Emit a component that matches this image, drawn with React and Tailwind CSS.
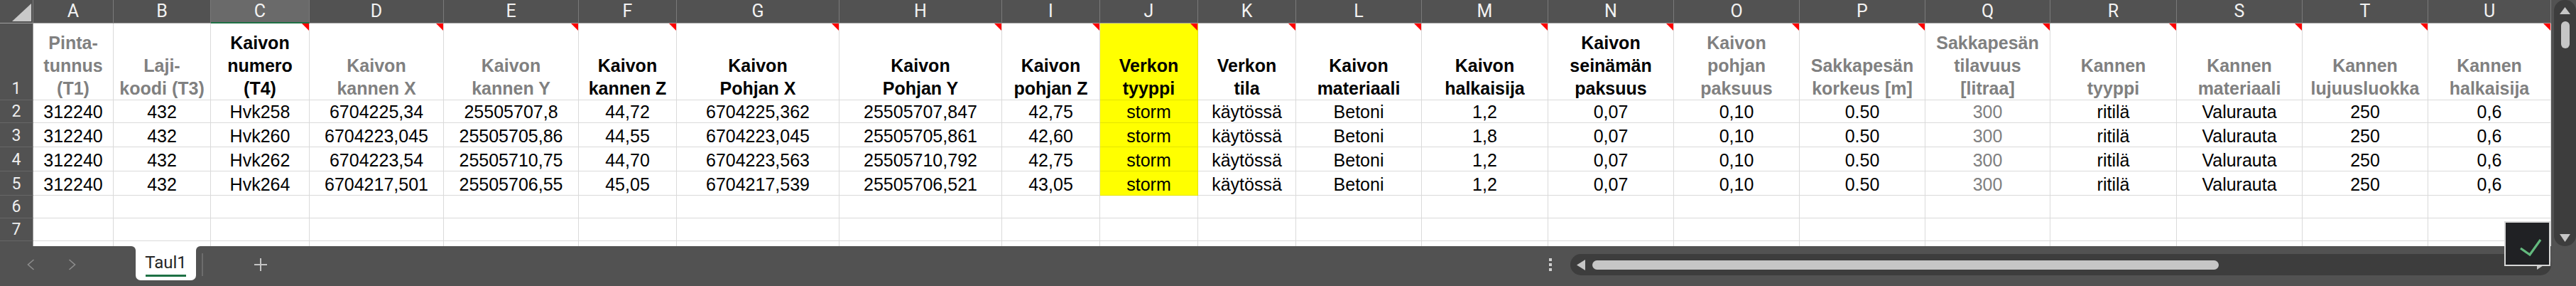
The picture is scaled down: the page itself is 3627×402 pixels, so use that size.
import React from 'react';

const LETTERS = 'ABCDEFGHIJKLMNOPQRSTU'.split('');

const HEADS = [
  { t: ['Pinta-', 'tunnus', '(T1)'], gray: true },
  { t: ['Laji-', 'koodi (T3)'], gray: true },
  { t: ['Kaivon', 'numero', '(T4)'] },
  { t: ['Kaivon', 'kannen X'], gray: true },
  { t: ['Kaivon', 'kannen Y'], gray: true },
  { t: ['Kaivon', 'kannen Z'] },
  { t: ['Kaivon', 'Pohjan X'] },
  { t: ['Kaivon', 'Pohjan Y'] },
  { t: ['Kaivon', 'pohjan Z'] },
  { t: ['Verkon', 'tyyppi'] },
  { t: ['Verkon', 'tila'] },
  { t: ['Kaivon', 'materiaali'] },
  { t: ['Kaivon', 'halkaisija'] },
  { t: ['Kaivon', 'seinämän', 'paksuus'] },
  { t: ['Kaivon', 'pohjan', 'paksuus'], gray: true },
  { t: ['Sakkapesän', 'korkeus [m]'], gray: true },
  { t: ['Sakkapesän', 'tilavuus', '[litraa]'], gray: true },
  { t: ['Kannen', 'tyyppi'], gray: true },
  { t: ['Kannen', 'materiaali'], gray: true },
  { t: ['Kannen', 'lujuusluokka'], gray: true },
  { t: ['Kannen', 'halkaisija'], gray: true },
];

const tail = ['storm', 'käytössä', 'Betoni'];
const end = ['0,07', '0,10', '0.50', '300', 'ritilä', 'Valurauta', '250', '0,6'];

const ROWS = [
  ['312240', '432', 'Hvk258', '6704225,34', '25505707,8', '44,72', '6704225,362', '25505707,847', '42,75', ...tail, '1,2', ...end],
  ['312240', '432', 'Hvk260', '6704223,045', '25505705,86', '44,55', '6704223,045', '25505705,861', '42,60', ...tail, '1,8', ...end],
  ['312240', '432', 'Hvk262', '6704223,54', '25505710,75', '44,70', '6704223,563', '25505710,792', '42,75', ...tail, '1,2', ...end],
  ['312240', '432', 'Hvk264', '6704217,501', '25505706,55', '45,05', '6704217,539', '25505706,521', '43,05', ...tail, '1,2', ...end],
];

const YELLOW = 9; // column J
const GRAY_DATA = 16; // column Q

const RedMark = () => (
  <svg className="absolute top-0 right-0" width="10" height="10" viewBox="0 0 10 10">
    <polygon points="0,0 10,0 10,10" fill="#ff0000" />
  </svg>
);

const RowNum = ({ n }) => (
  <div className="flex items-end justify-center bg-[#525252] border-r border-r-[#9a9a9a] border-b border-b-[#666666] text-[#eeeeee] text-[23px] leading-[30px] font-['Roboto',sans-serif]">
    {n}
  </div>
);

const DataCell = ({ value, col, filled }) => {
  const yellow = filled && col === YELLOW;
  return (
    <div
      className={
        yellow
          ? 'flex items-end justify-center border-r border-b border-[#e4e400] bg-[#ffff00] text-black text-[25px] leading-[30px] whitespace-nowrap overflow-hidden'
          : col === GRAY_DATA
          ? 'flex items-end justify-center border-r border-b border-[#dadada] bg-white text-[#808080] text-[25px] leading-[30px] whitespace-nowrap overflow-hidden'
          : 'flex items-end justify-center border-r border-b border-[#dadada] bg-white text-black text-[25px] leading-[30px] whitespace-nowrap overflow-hidden'
      }
    >
      {value}
    </div>
  );
};

const Chevron = ({ dir }) => (
  <svg width="11" height="16" viewBox="0 0 11 16">
    <polyline
      points={dir === 'left' ? '9.5,1 1.5,8 9.5,15' : '1.5,1 9.5,8 1.5,15'}
      fill="none"
      stroke="#8d8d8d"
      strokeWidth="1.6"
    />
  </svg>
);

export default function App() {
  return (
    <div className="relative w-[3627px] h-[402px] overflow-hidden bg-white font-['Liberation_Sans',Arial,sans-serif]">
      <div className="flex h-[346px]">
        {/* sheet grid */}
        <div className="grid w-[3592px] h-[346px] overflow-hidden grid-cols-[47px_113px_137px_139px_189px_190px_138px_229px_229px_138px_138px_138px_177px_178px_177px_177px_177px_176px_178px_177px_177px_173px] grid-rows-[33px_108px_32px_34px_34px_34px_32px_32px_33px]">
          {/* corner */}
          <div className="relative bg-[#525252] border-r border-r-[#7a7a7a] border-b border-b-[#a0a0a0]">
            <svg className="absolute left-[17px] top-[5px]" width="28" height="26" viewBox="0 0 28 26">
              <polygon points="0,25 27,0 27,25" fill="#c9c9c9" />
            </svg>
          </div>
          {LETTERS.map((l) =>
            l === 'C' ? (
              <div key={l} className="flex items-center justify-center bg-[#6a6a6a] border-r border-r-[#7a7a7a] border-b-2 border-b-[#1e7145] text-[#f2f2f2] text-[25px] font-['Roboto',sans-serif]">
                {l}
              </div>
            ) : (
              <div key={l} className="flex items-center justify-center bg-[#525252] border-r border-r-[#7a7a7a] border-b border-b-[#a0a0a0] text-[#f2f2f2] text-[25px] font-['Roboto',sans-serif]">
                {l}
              </div>
            )
          )}

          {/* row 1: headings */}
          <RowNum n={1} />
          {HEADS.map((h, i) => (
            <div
              key={i}
              className={
                i === YELLOW
                  ? 'relative flex flex-col items-center justify-end border-r border-b border-[#e4e400] bg-[#ffff00] text-black font-bold text-[25px] leading-[32px] whitespace-nowrap'
                  : h.gray
                  ? 'relative flex flex-col items-center justify-end border-r border-b border-[#dadada] bg-white text-[#808080] font-bold text-[25px] leading-[32px] whitespace-nowrap'
                  : 'relative flex flex-col items-center justify-end border-r border-b border-[#dadada] bg-white text-black font-bold text-[25px] leading-[32px] whitespace-nowrap'
              }
            >
              {h.t.map((line) => (
                <div key={line}>{line}</div>
              ))}
              {i >= 2 && <RedMark />}
            </div>
          ))}

          {/* rows 2-5 */}
          {ROWS.map((row, r) => (
            <React.Fragment key={r}>
              <RowNum n={r + 2} />
              {row.map((v, c) => (
                <DataCell key={c} value={v} col={c} filled />
              ))}
            </React.Fragment>
          ))}

          {/* empty rows 6-7, plus the sliver of row 8 under the tab bar */}
          {[6, 7, ''].map((n, k) => (
            <React.Fragment key={k}>
              <RowNum n={n} />
              {LETTERS.map((l, c) => (
                <DataCell key={l} value="" col={c} />
              ))}
            </React.Fragment>
          ))}
        </div>

        {/* vertical scrollbar */}
        <div className="w-[35px] h-[346px] bg-[#525252] pl-[4px]">
          <div className="flex flex-col items-center h-full w-[31px] rounded-[15px] bg-[#3d3d3d] pt-[10px] pb-[6px]">
            <svg width="15" height="10" viewBox="0 0 15 10">
              <polygon points="7.5,0 15,10 0,10" fill="#c6c6c6" />
            </svg>
            <div className="mt-[10px] w-[12px] h-[38px] rounded-full bg-[#c6c6c6]" />
            <div className="flex-1" />
            <svg width="15" height="11" viewBox="0 0 15 11">
              <polygon points="0,0 15,0 7.5,11" fill="#c6c6c6" />
            </svg>
          </div>
        </div>
      </div>

      {/* sheet tabs bar */}
      <div className="flex h-[56px] bg-white">
        <div className="flex items-center w-[191px] pl-[38px] pb-[4px] gap-[47px] bg-[#525252] rounded-tr-[6px]">
          <Chevron dir="left" />
          <Chevron dir="right" />
        </div>
        <div className="w-[85px] bg-[#525252]">
          <div className="flex flex-col items-center h-[48px] bg-white rounded-b-[7px] pt-[9px]">
            <span className="text-[24px] leading-[28px] text-[#262626] font-['Roboto',sans-serif]">Taul1</span>
            <div className="mt-[3px] w-[57px] h-[3px] bg-[#1e7145]" />
          </div>
        </div>
        <div className="flex flex-1 items-center pb-[4px] pr-[35px] bg-[#525252] rounded-tl-[6px]">
          <div className="ml-[8px] w-[2px] h-[32px] bg-[#6c6c6c]" />
          <svg className="ml-[72px]" width="18" height="18" viewBox="0 0 18 18">
            <path d="M9 0v18M0 9h18" stroke="#c4c4c4" strokeWidth="2" />
          </svg>
          <div className="flex-1" />
          <div className="flex flex-col gap-[3px]">
            <div className="w-[4px] h-[4px] bg-[#cfcfcf]" />
            <div className="w-[4px] h-[4px] bg-[#cfcfcf]" />
            <div className="w-[4px] h-[4px] bg-[#cfcfcf]" />
          </div>
          <div className="flex items-center ml-[26px] w-[1381px] h-[30px] rounded-full bg-[#3d3d3d] pl-[9px] pr-[10px]">
            <svg width="12" height="15" viewBox="0 0 12 15">
              <polygon points="0,7.5 12,0 12,15" fill="#c6c6c6" />
            </svg>
            <div className="ml-[10px] w-[882px] h-[13px] rounded-full bg-[#c6c6c6]" />
            <div className="flex-1" />
            <svg width="10" height="13" viewBox="0 0 10 13">
              <polygon points="0,0 10,6.5 0,13" fill="#c6c6c6" />
            </svg>
          </div>
        </div>
      </div>

      {/* accept/check button floating over the corner */}
      <div className="absolute left-[3526px] top-[311px] w-[65px] h-[63px] bg-[#202124] border-2 border-[#d6d6d6]">
        <svg width="61" height="59" viewBox="0 0 61 59">
          <polyline points="21,36 34,45 49,24" fill="none" stroke="#63b97e" strokeWidth="3.2" />
        </svg>
      </div>
    </div>
  );
}
